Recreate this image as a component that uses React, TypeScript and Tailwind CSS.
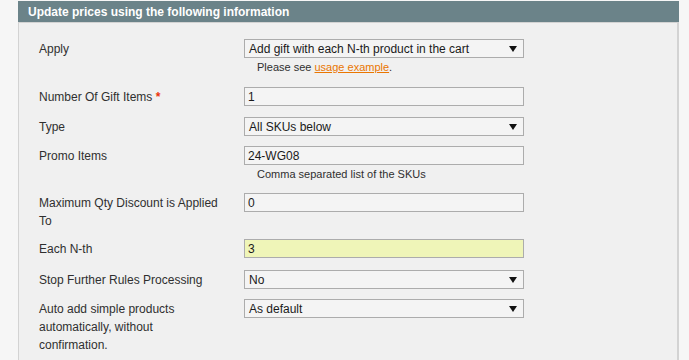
import React from "react";

function Arrow() {
  return (
    <svg width="8" height="7" viewBox="0 0 8 7" className="shrink-0">
      <path d="M0 1h8L4 7z" fill="#111" />
    </svg>
  );
}

function Select({ value }: { value: string }) {
  return (
    <div className="flex h-[19px] w-[280px] items-center justify-between border border-[#acacac] bg-[#f4f4f4] pl-[4px] pr-[6px] text-[12px] text-[#1a1a1a]">
      <span>{value}</span>
      <Arrow />
    </div>
  );
}

function Input({ value, highlight }: { value: string; highlight?: boolean }) {
  return (
    <div
      className={`flex h-[19px] w-[280px] items-center border border-[#acacac] pl-[3px] text-[12px] text-[#1a1a1a] ${
        highlight ? "bg-[#eff5b8]" : "bg-[#f4f4f4]"
      }`}
    >
      {value}
    </div>
  );
}

function Row({
  label,
  children,
  className = "",
}: {
  label: React.ReactNode;
  children: React.ReactNode;
  className?: string;
}) {
  return (
    <div className={`flex ${className}`}>
      <div className="w-[205px] shrink-0 pt-[1px] pr-[24px] text-[12px] leading-[18px] text-[#2f2f2f]">
        {label}
      </div>
      <div className="flex flex-col">{children}</div>
    </div>
  );
}

export default function App() {
  return (
    <div
      className="min-h-[360px] bg-[#f6f6f6] pt-[1px] pl-[18px] pr-[10px]"
      style={{ fontFamily: '"Liberation Sans", Arial, sans-serif' }}
    >
      <div className="flex h-[21px] items-center bg-[#6b8389] pl-[10px] text-[12px] font-bold text-white">
        Update prices using the following information
      </div>
      <div className="min-h-[338px] border-t border-l border-r-2 border-[#d3d3d3] bg-[#f0f0f0] pt-[16px] pl-[20px]">
        <Row label="Apply">
          <Select value="Add gift with each N-th product in the cart" />
          <div className="pl-[13px] pt-[1px] text-[11px] leading-[17px] text-[#2f2f2f]">
            Please see{" "}
            <span className="text-[#ea7601] underline">usage example</span>.
          </div>
        </Row>
        <Row
          className="mt-[11px]"
          label={
            <>
              Number Of Gift Items <span className="font-bold text-[#eb340a]">*</span>
            </>
          }
        >
          <Input value="1" />
        </Row>
        <Row className="mt-[11px]" label="Type">
          <Select value="All SKUs below" />
        </Row>
        <Row className="mt-[10px]" label="Promo Items">
          <Input value="24-WG08" />
          <div className="pl-[13px] pt-[1px] text-[11px] leading-[17px] text-[#2f2f2f]">
            Comma separated list of the SKUs
          </div>
        </Row>
        <Row className="mt-[10px]" label="Maximum Qty Discount is Applied To">
          <Input value="0" />
        </Row>
        <Row className="mt-[9px]" label="Each N-th">
          <Input value="3" highlight />
        </Row>
        <Row className="mt-[12px]" label="Stop Further Rules Processing">
          <Select value="No" />
        </Row>
        <Row className="mt-[10px]" label="Auto add simple products automatically, without confirmation.">
          <Select value="As default" />
        </Row>
      </div>
    </div>
  );
}
